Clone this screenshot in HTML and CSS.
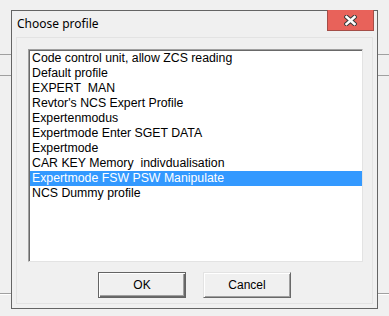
FILE: index.html
```html
<!DOCTYPE html>
<html lang="en">
<head>
    <meta charset="UTF-8">
    <meta name="viewport" content="width=device-width, initial-scale=1.0">
    <title>Choose profile</title>
    <link rel="stylesheet" href="styles.css">
</head>
<body>
    <div class="dialog">
        <div class="titlebar">
            <span class="title">Choose profile</span>
            <button class="close-btn" aria-label="Close">
                <svg width="13" height="11" viewBox="0 0 13 11">
                    <path d="M2.5 2 L10.5 9 M10.5 2 L2.5 9" stroke="#3a3a3a" stroke-width="4.5" stroke-linecap="square" fill="none"/>
                    <path d="M2.5 2 L10.5 9 M10.5 2 L2.5 9" stroke="#fff" stroke-width="2.5" stroke-linecap="square" fill="none"/>
                </svg>
            </button>
        </div>
        <div class="panel">
            <ul class="listbox">
                <li>Code control unit, allow ZCS reading</li>
                <li>Default profile</li>
                <li>EXPERT&nbsp; MAN</li>
                <li>Revtor's NCS Expert Profile</li>
                <li>Expertenmodus</li>
                <li>Expertmode Enter SGET DATA</li>
                <li>Expertmode</li>
                <li>CAR KEY Memory&nbsp; indivdualisation</li>
                <li class="selected">Expertmode FSW PSW Manipulate</li>
                <li>NCS Dummy profile</li>
            </ul>
            <div class="buttons">
                <button class="btn default">OK</button>
                <button class="btn">Cancel</button>
            </div>
        </div>
    </div>
</body>
</html>
```

FILE: styles.css
```css
html, body {
    height: 316px;
}

body {
    margin: 0;
    overflow: hidden;
    font-family: 'Liberation Sans', Arial, sans-serif;
    font-size: 12px;
    background: linear-gradient(#f0f0f0 0 54px, #a0a0a0 54px 55px, #f0f0f0 55px 75px,
        #a0a0a0 75px 76px, #f0f0f0 76px 293px, #a0a0a0 293px 294px, #fff 294px 295px, #f0f0f0 295px);
}

.dialog {
    box-sizing: border-box;
    margin: 10px 0 0 11px;
    width: 367px;
    height: 299px;
    border: 1px solid #646464;
    background-color: #f0f0f0;
    display: flex;
    flex-direction: column;
}

.titlebar {
    height: 26px;
    display: flex;
    justify-content: space-between;
    align-items: flex-start;
}

.title {
    font-family: 'Noto Sans', sans-serif;
    font-size: 12px;
    line-height: 26px;
    padding-left: 5px;
    color: #000;
}

.close-btn {
    box-sizing: border-box;
    width: 47px;
    height: 21px;
    margin: -1px 3px 0 0;
    padding: 0;
    border: 1px solid #a44d47;
    border-top: none;
    background-color: #e8625a;
    display: flex;
    justify-content: center;
    align-items: center;
}

.panel {
    flex: 1;
    margin: 0 4px 4px;
    border: 1px solid #e3e3e3;
    padding: 11px 0 0 11px;
}

.listbox {
    box-sizing: border-box;
    width: 335px;
    height: 213px;
    margin: 0;
    padding: 1px 0 0 1px;
    list-style: none;
    background-color: #fff;
    border-top: 1px solid #a0a0a0;
    border-left: 1px solid #a0a0a0;
    border-right: 1px solid #e3e3e3;
    border-bottom: 1px solid #e3e3e3;
    box-shadow: inset 1px 1px #696969;
}

.listbox li {
    font-size: 12.3px;
    line-height: 15px;
    height: 15px;
    padding-left: 2px;
    color: #000;
    white-space: pre;
}

.listbox li.selected {
    background-color: #3399ff;
    color: #fff;
}

.buttons {
    margin-top: 10px;
    margin-left: -11px;
    display: flex;
    justify-content: center;
    gap: 17px;
}

.btn {
    box-sizing: border-box;
    width: 88px;
    height: 26px;
    padding: 0;
    font-family: 'Liberation Sans', Arial, sans-serif;
    font-size: 12px;
    color: #000;
    background-color: #f0f0f0;
    border: 1px solid;
    border-color: #e3e3e3 #696969 #696969 #e3e3e3;
    box-shadow: inset 1px 1px #fff, inset -1px -1px #a0a0a0;
}

.btn.default {
    border-color: #646464;
    box-shadow: inset 1px 1px #fff, inset -1px -1px #696969, inset -2px -2px #a0a0a0;
}
```
